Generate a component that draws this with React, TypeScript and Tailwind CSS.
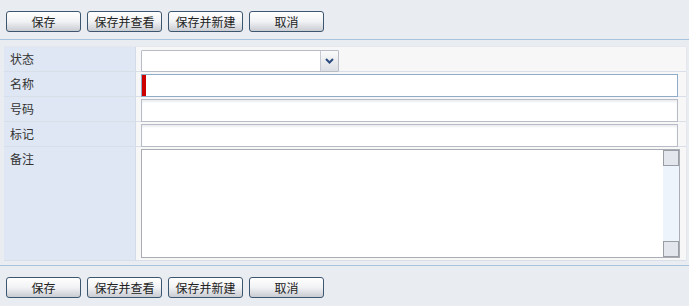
import React from 'react';

const font = { fontFamily: '"Noto Sans CJK SC", "Liberation Sans", sans-serif' };

function Btn({ label }: { label: string }) {
  return (
    <button className="w-[75px] h-[21px] rounded-[3px] border border-[#3d5670] bg-gradient-to-b from-[#ffffff] via-[#f1f2f4] to-[#c9ccd2] text-[12px] leading-[19px] text-[#222] shadow-[inset_0_1px_0_#fff]">
      {label}
    </button>
  );
}

function Toolbar() {
  return (
    <div className="flex gap-[6px] px-[6px] h-[21px]">
      <Btn label="保存" />
      <Btn label="保存并查看" />
      <Btn label="保存并新建" />
      <Btn label="取消" />
    </div>
  );
}

function Row({ label, children, tall }: { label: string; children: React.ReactNode; tall?: boolean }) {
  return (
    <div className={`flex border-b border-[#d9dfe8] ${tall ? 'h-[114px]' : 'h-[25px]'}`}>
      <div className="w-[132px] shrink-0 bg-[#dfe7f4] border-r border-[#d3dbe6] pl-[6px] pt-[3px] text-[12px] leading-[18px] text-[#333]">
        {label}
      </div>
      <div className="flex-1 bg-[#f7f7f7] pl-[5px] pr-[8px] pt-[2px]">{children}</div>
    </div>
  );
}

function TextInput({ focused }: { focused?: boolean }) {
  return (
    <div
      className={`relative h-[23px] bg-white border ${
        focused ? 'border-[#8fabc8]' : 'border-[#b8bcc6] shadow-[inset_0_2px_2px_#eceef1]'
      }`}
    >
      {focused && <div className="absolute left-0 top-0 bottom-0 w-[4px] bg-[#cc0000]" />}
    </div>
  );
}

export default function App() {
  return (
    <div className="w-[689px] h-[306px] bg-[#e9edf1] overflow-hidden" style={font}>
      <div className="pt-[11px] h-[39px]">
        <Toolbar />
      </div>
      <div className="border-t border-[#a9c2de] h-[1px]" />
      <div className="pt-[6px] px-[4px] pr-[2px]">
        <div className="border-t border-[#dce2ea] border-r border-[#e4e8ee] bg-[#f2f4f7]">
          <Row label="状态">
            <div className="flex w-[198px] h-[22px] bg-white border border-[#b8bcc6] rounded-[1px] mt-[1px]">
              <div className="flex-1" />
              <div className="w-[18px] h-full border-l border-[#c6cad2] bg-gradient-to-b from-[#fafafa] to-[#dcdfe4] flex items-center justify-center">
                <svg width="9" height="6" viewBox="0 0 9 6">
                  <path d="M1 1 L4.5 4.5 L8 1" stroke="#2b4a7e" strokeWidth="2" fill="none" />
                </svg>
              </div>
            </div>
          </Row>
          <Row label="名称">
            <TextInput focused />
          </Row>
          <Row label="号码">
            <TextInput />
          </Row>
          <Row label="标记">
            <TextInput />
          </Row>
          <Row label="备注" tall>
            <div className="flex h-[109px] mr-[-2px] bg-white border border-[#a9acb3]">
              <div className="flex-1" />
              <div className="w-[16px] flex flex-col justify-between bg-[#eef4fb]">
                <div className="h-[16px] bg-[#e3e6ec] border border-[#9a9da4]" />
                <div className="h-[16px] bg-[#e3e6ec] border border-[#9a9da4]" />
              </div>
            </div>
          </Row>
        </div>
      </div>
      <div className="mt-[4px] border-t border-[#a9c2de] h-[1px]" />
      <div className="pt-[11px]">
        <Toolbar />
      </div>
    </div>
  );
}
